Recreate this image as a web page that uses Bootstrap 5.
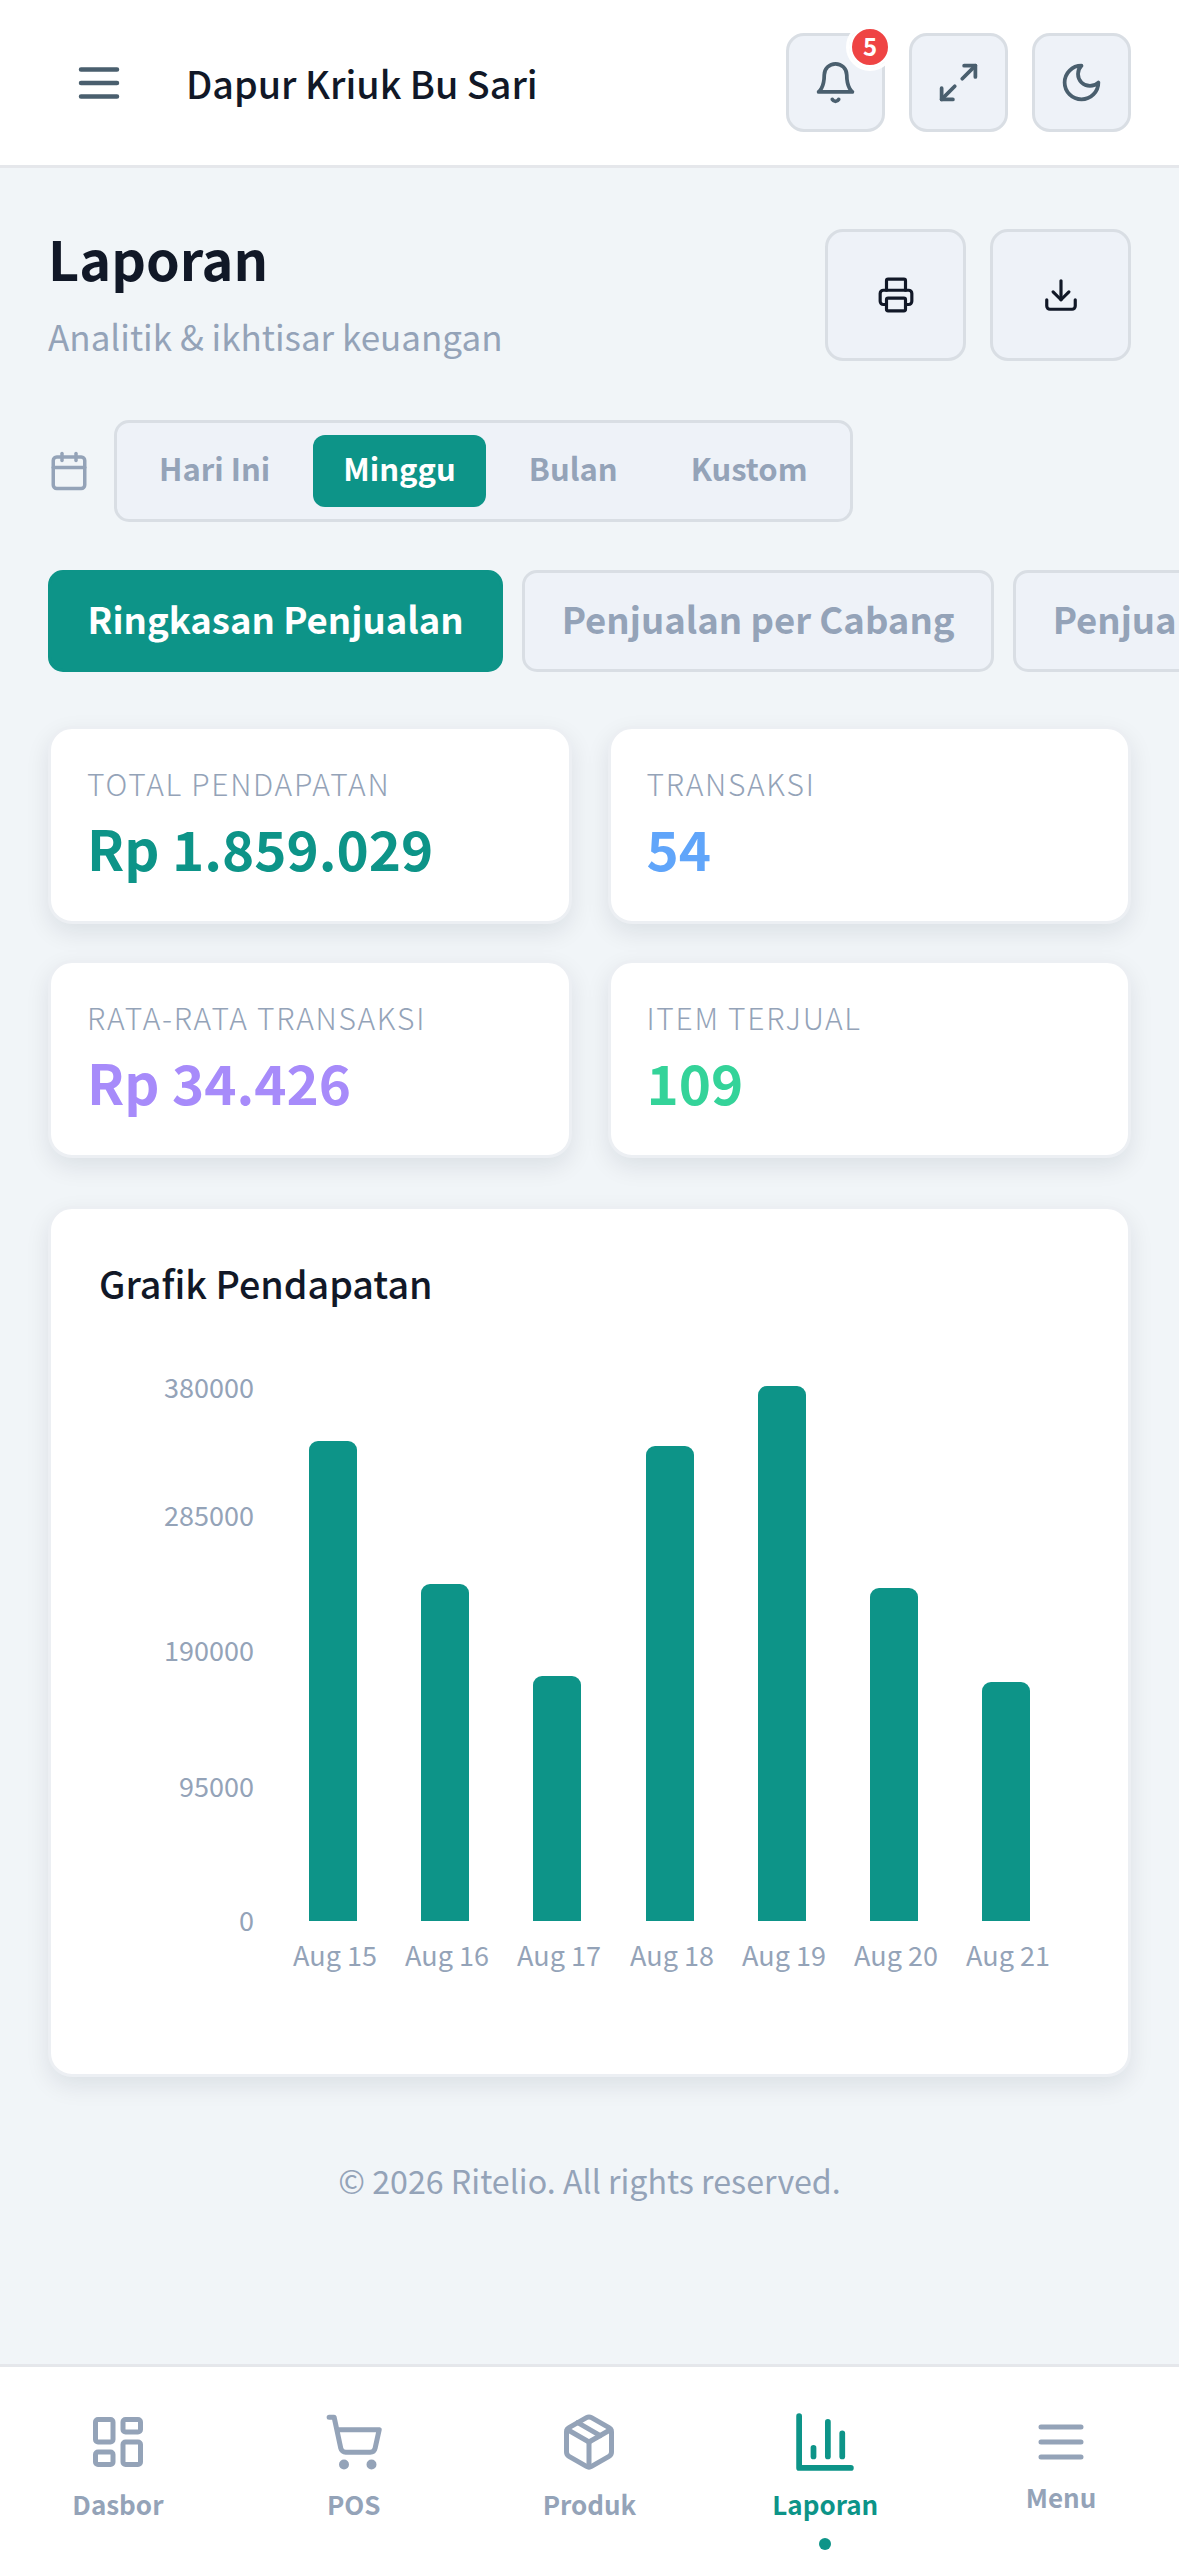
<!DOCTYPE html>
<html lang="id">
<head>
  <meta charset="UTF-8" />
  <meta name="viewport" content="width=device-width, initial-scale=1.0"/>
  <title>Laporan – Dapur Kriuk Bu Sari</title>
  <link href="https://cdn.jsdelivr.net/npm/bootstrap@5.3.0/dist/css/bootstrap.min.css" rel="stylesheet" />
  <style>
    html, body {
      height: 2556px;
      overflow: hidden;
    }
    body {
      background-color: #f1f5f8;
      color: #111827;
      font-family: "Noto Sans CJK SC", "Noto Sans", sans-serif;
    }
    svg {
      fill: none;
      stroke: currentColor;
      stroke-width: 2;
      stroke-linecap: round;
      stroke-linejoin: round;
      display: block;
    }
    .app-top {
      height: 168px;
      background: #fff;
      border-bottom: 3px solid #e5e7eb;
      padding: 0 48px 0 72px;
    }
    .app-top .burger { width: 54px; height: 54px; color: #4a5f6e; }
    .app-title {
      font-size: 37.7px;
      font-weight: 500;
      line-height: 54px;
      margin-left: 60px;
    }
    .icon-box {
      width: 99px;
      height: 99px;
      background: #eef2f8;
      border: 3px solid #d9dee4;
      border-radius: 18px;
      color: #4a5f6e;
      padding: 0;
    }
    .icon-box svg { width: 45px; height: 45px; }
    .notif {
      top: -10px;
      right: -9px;
      width: 42px;
      height: 42px;
      background: #ef4444;
      border: 3px solid #fff;
      outline: 3px solid #fff;
      color: #fff;
      font-size: 24px;
      font-weight: 700;
      line-height: 34px;
      text-align: center;
      border-radius: 50%;
    }
    .app-main { padding: 61px 48px 0; }
    .page-title {
      font-size: 54px;
      font-weight: 700;
      line-height: 57px;
      margin: 0;
    }
    .page-sub {
      font-size: 35px;
      line-height: 48px;
      color: #94a3b8;
      margin: 26px 0 0;
    }
    .act-box {
      width: 141px;
      height: 132px;
      background: #eef2f8;
      border: 3px solid #d9dee4;
      border-radius: 18px;
      color: #111827;
      padding: 0;
    }
    .act-box svg { width: 38px; height: 38px; }
    .range-row { margin-top: 59px; gap: 24px; }
    .range-row > svg { width: 42px; height: 42px; color: #94a3b8; }
    .range-box {
      height: 102px;
      background: #eef2f8;
      border: 3px solid #d9dee4;
      border-radius: 15px;
      padding: 12px;
      gap: 13px;
    }
    .range-opt {
      height: 72px;
      padding: 0 30px;
      font-size: 31px;
      font-weight: 600;
      line-height: 66px;
      color: #94a3b8;
      border-radius: 12px;
    }
    .range-opt.on { background: #0d9488; color: #fff; }
    .tab-row { margin-top: 48px; gap: 19px; margin-right: -48px; overflow: hidden; }
    .tab-opt {
      flex: none;
      height: 102px;
      padding: 0 36.5px;
      background: #eef2f8;
      border: 3px solid #d9dee4;
      border-radius: 15px;
      font-size: 36.5px;
      font-weight: 600;
      line-height: 91px;
      color: #94a3b8;
      white-space: nowrap;
    }
    .tab-opt.on { background: #0d9488; border-color: #0d9488; color: #fff; }
    .stat-grid {
      display: grid;
      grid-template-columns: 1fr 1fr;
      gap: 36px;
      margin-top: 54px;
    }
    .stat-box, .chart-box {
      background: #fff;
      border: 3px solid #eceff3;
      border-radius: 24px;
      box-shadow: 0 9px 24px rgba(15, 23, 42, .09);
    }
    .stat-box { height: 198px; padding: 32px 36px 0; }
    .stat-label {
      font-size: 30px;
      font-weight: 300;
      line-height: 45px;
      letter-spacing: 1.7px;
      color: #94a3b8;
      white-space: nowrap;
    }
    .stat-val {
      font-size: 54.7px;
      font-weight: 700;
      line-height: 72px;
      margin-top: 6px;
    }
    .c-teal { color: #0d9488; }
    .c-blue { color: #60a5fa; }
    .c-purple { color: #a78bfa; }
    .c-green { color: #34d399; }
    .chart-box { margin-top: 48px; height: 871px; }
    .chart-title {
      font-size: 37.7px;
      font-weight: 500;
      line-height: 58px;
      padding: 45px 48px 0;
      margin: 0;
    }
    .chart-svg { margin-top: 19px; width: 1077px; height: 743px; stroke: none; }
    .chart-svg text {
      font-family: "Noto Sans CJK SC", "Noto Sans", sans-serif;
      font-size: 27px;
      fill: #94a3b8;
      stroke: none;
    }
    .chart-svg path { fill: #0d9488; stroke: none; }
    .foot-note {
      margin: 79px 0 0;
      font-size: 32.2px;
      line-height: 48px;
      text-align: center;
      color: #94a3b8;
    }
    .app-nav {
      height: 192px;
      background: #fff;
      border-top: 3px solid #e5e7eb;
    }
    .nav-item-x {
      flex: 1 1 0;
      padding-top: 45px;
      color: #94a3b8;
    }
    .nav-item-x svg { width: 60px; height: 60px; }
    .nav-item-x span {
      font-size: 26px;
      font-weight: 600;
      line-height: 48px;
      margin-top: 8px;
    }
    .nav-item-x.active-x { color: #0d9488; }
    .nav-item-x.active-x svg { transform: scale(1.15); }
    .nav-item-x.menu-x span { margin-top: 1px; }
    .nav-dot {
      width: 12px;
      height: 12px;
      background: #0d9488;
      border-radius: 50%;
      margin-top: 10px;
    }
  </style>
</head>
<body class="d-flex flex-column">

  <!-- Barra atas -->
  <header class="app-top d-flex align-items-center justify-content-between flex-shrink-0">
    <div class="d-flex align-items-center">
      <svg class="burger" viewBox="0 0 24 24"><path d="M4 6h16M4 12h16M4 18h16"/></svg>
      <span class="app-title">Dapur Kriuk Bu Sari</span>
    </div>
    <div class="d-flex">
      <button class="btn icon-box d-flex align-items-center justify-content-center position-relative me-4">
        <svg viewBox="0 0 24 24"><path d="M6 8a6 6 0 0 1 12 0c0 7 3 9 3 9H3s3-2 3-9"/><path d="M10.3 21a1.94 1.94 0 0 0 3.4 0"/></svg>
        <span class="notif position-absolute">5</span>
      </button>
      <button class="btn icon-box d-flex align-items-center justify-content-center me-4">
        <svg viewBox="0 0 24 24"><path d="M15 3h6v6"/><path d="m21 3-7 7"/><path d="m3 21 7-7"/><path d="M9 21H3v-6"/></svg>
      </button>
      <button class="btn icon-box d-flex align-items-center justify-content-center">
        <svg viewBox="0 0 24 24"><path d="M12 3a6 6 0 0 0 9 9 9 9 0 1 1-9-9Z"/></svg>
      </button>
    </div>
  </header>

  <main class="app-main flex-grow-1 overflow-hidden">
    <div class="d-flex justify-content-between align-items-start">
      <div>
        <h1 class="page-title">Laporan</h1>
        <p class="page-sub">Analitik &amp; ikhtisar keuangan</p>
      </div>
      <div class="d-flex">
        <button class="btn act-box d-flex align-items-center justify-content-center me-4">
          <svg viewBox="0 0 24 24"><path d="M6 18H4a2 2 0 0 1-2-2v-5a2 2 0 0 1 2-2h16a2 2 0 0 1 2 2v5a2 2 0 0 1-2 2h-2"/><path d="M6 9V3a1 1 0 0 1 1-1h10a1 1 0 0 1 1 1v6"/><rect x="6" y="14" width="12" height="8" rx="1"/></svg>
        </button>
        <button class="btn act-box d-flex align-items-center justify-content-center">
          <svg viewBox="0 0 24 24"><path d="M21 15v4a2 2 0 0 1-2 2H5a2 2 0 0 1-2-2v-4"/><path d="m7 10 5 5 5-5"/><path d="M12 15V3"/></svg>
        </button>
      </div>
    </div>

    <div class="range-row d-flex align-items-center">
      <svg viewBox="0 0 24 24"><path d="M8 2v4"/><path d="M16 2v4"/><rect x="3" y="4" width="18" height="18" rx="2"/><path d="M3 10h18"/></svg>
      <div class="range-box d-flex align-items-center">
        <div class="range-opt">Hari Ini</div>
        <div class="range-opt on">Minggu</div>
        <div class="range-opt">Bulan</div>
        <div class="range-opt">Kustom</div>
      </div>
    </div>

    <div class="tab-row d-flex">
      <div class="tab-opt on">Ringkasan Penjualan</div>
      <div class="tab-opt">Penjualan per Cabang</div>
      <div class="tab-opt">Penjualan per Produk</div>
    </div>

    <div class="stat-grid">
      <div class="stat-box">
        <div class="stat-label">TOTAL PENDAPATAN</div>
        <div class="stat-val c-teal">Rp 1.859.029</div>
      </div>
      <div class="stat-box">
        <div class="stat-label">TRANSAKSI</div>
        <div class="stat-val c-blue">54</div>
      </div>
      <div class="stat-box">
        <div class="stat-label">RATA-RATA TRANSAKSI</div>
        <div class="stat-val c-purple">Rp 34.426</div>
      </div>
      <div class="stat-box">
        <div class="stat-label">ITEM TERJUAL</div>
        <div class="stat-val c-green">109</div>
      </div>
    </div>

    <div class="chart-box">
      <h2 class="chart-title">Grafik Pendapatan</h2>
      <svg class="chart-svg" id="chartPendapatan" viewBox="51 1330 1077 743"></svg>
    </div>

    <p class="foot-note">© 2026 Ritelio. All rights reserved.</p>
  </main>

  <!-- Navigasi bawah -->
  <nav class="app-nav d-flex flex-shrink-0">
    <div class="nav-item-x d-flex flex-column align-items-center">
      <svg viewBox="0 0 24 24"><rect x="3" y="3" width="7" height="9" rx="1"/><rect x="14" y="3" width="7" height="5" rx="1"/><rect x="14" y="12" width="7" height="9" rx="1"/><rect x="3" y="16" width="7" height="5" rx="1"/></svg>
      <span>Dasbor</span>
    </div>
    <div class="nav-item-x d-flex flex-column align-items-center">
      <svg viewBox="0 0 24 24"><circle cx="8" cy="21" r="1"/><circle cx="19" cy="21" r="1"/><path d="M2.05 2.05h2l2.66 12.42a2 2 0 0 0 2 1.58h9.78a2 2 0 0 0 1.95-1.57l1.65-7.43H5.12"/></svg>
      <span>POS</span>
    </div>
    <div class="nav-item-x d-flex flex-column align-items-center">
      <svg viewBox="0 0 24 24"><path d="m7.5 4.27 9 5.15"/><path d="M21 8a2 2 0 0 0-1-1.73l-7-4a2 2 0 0 0-2 0l-7 4A2 2 0 0 0 3 8v8a2 2 0 0 0 1 1.73l7 4a2 2 0 0 0 2 0l7-4A2 2 0 0 0 21 16Z"/><path d="m3.3 7 8.7 5 8.7-5"/><path d="M12 22V12"/></svg>
      <span>Produk</span>
    </div>
    <div class="nav-item-x active-x d-flex flex-column align-items-center">
      <svg viewBox="0 0 24 24"><path d="M3 3v18h18"/><path d="M18 17V9"/><path d="M13 17V5"/><path d="M8 17v-3"/></svg>
      <span>Laporan</span>
      <div class="nav-dot"></div>
    </div>
    <div class="nav-item-x menu-x d-flex flex-column align-items-center">
      <svg viewBox="0 0 24 24"><path d="M4 6h16M4 12h16M4 18h16"/></svg>
      <span>Menu</span>
    </div>
  </nav>

  <script>
    // tops are read off the picture, same coordinates as the viewBox
    const dados = [
      { x: 309, topo: 1440, rotulo: "Aug 15" },
      { x: 421, topo: 1583, rotulo: "Aug 16" },
      { x: 533, topo: 1675, rotulo: "Aug 17" },
      { x: 646, topo: 1445, rotulo: "Aug 18" },
      { x: 758, topo: 1385, rotulo: "Aug 19" },
      { x: 870, topo: 1587, rotulo: "Aug 20" },
      { x: 982, topo: 1681, rotulo: "Aug 21" }
    ];
    const eixo = [
      { y: 1388, v: "380000" },
      { y: 1516, v: "285000" },
      { y: 1651, v: "190000" },
      { y: 1787, v: "95000" },
      { y: 1921, v: "0" }
    ];
    let html = "";
    eixo.forEach(e => {
      html += `<text x="254" y="${e.y + 9}" text-anchor="end">${e.v}</text>`;
    });
    dados.forEach(d => {
      html += `<path d="M${d.x} 1920V${d.topo + 9}a9 9 0 0 1 9-9h30a9 9 0 0 1 9 9V1920Z"/>`;
      html += `<text x="${d.x + 26}" y="1965" text-anchor="middle">${d.rotulo}</text>`;
    });
    document.getElementById("chartPendapatan").innerHTML = html;
  </script>
</body>
</html>
